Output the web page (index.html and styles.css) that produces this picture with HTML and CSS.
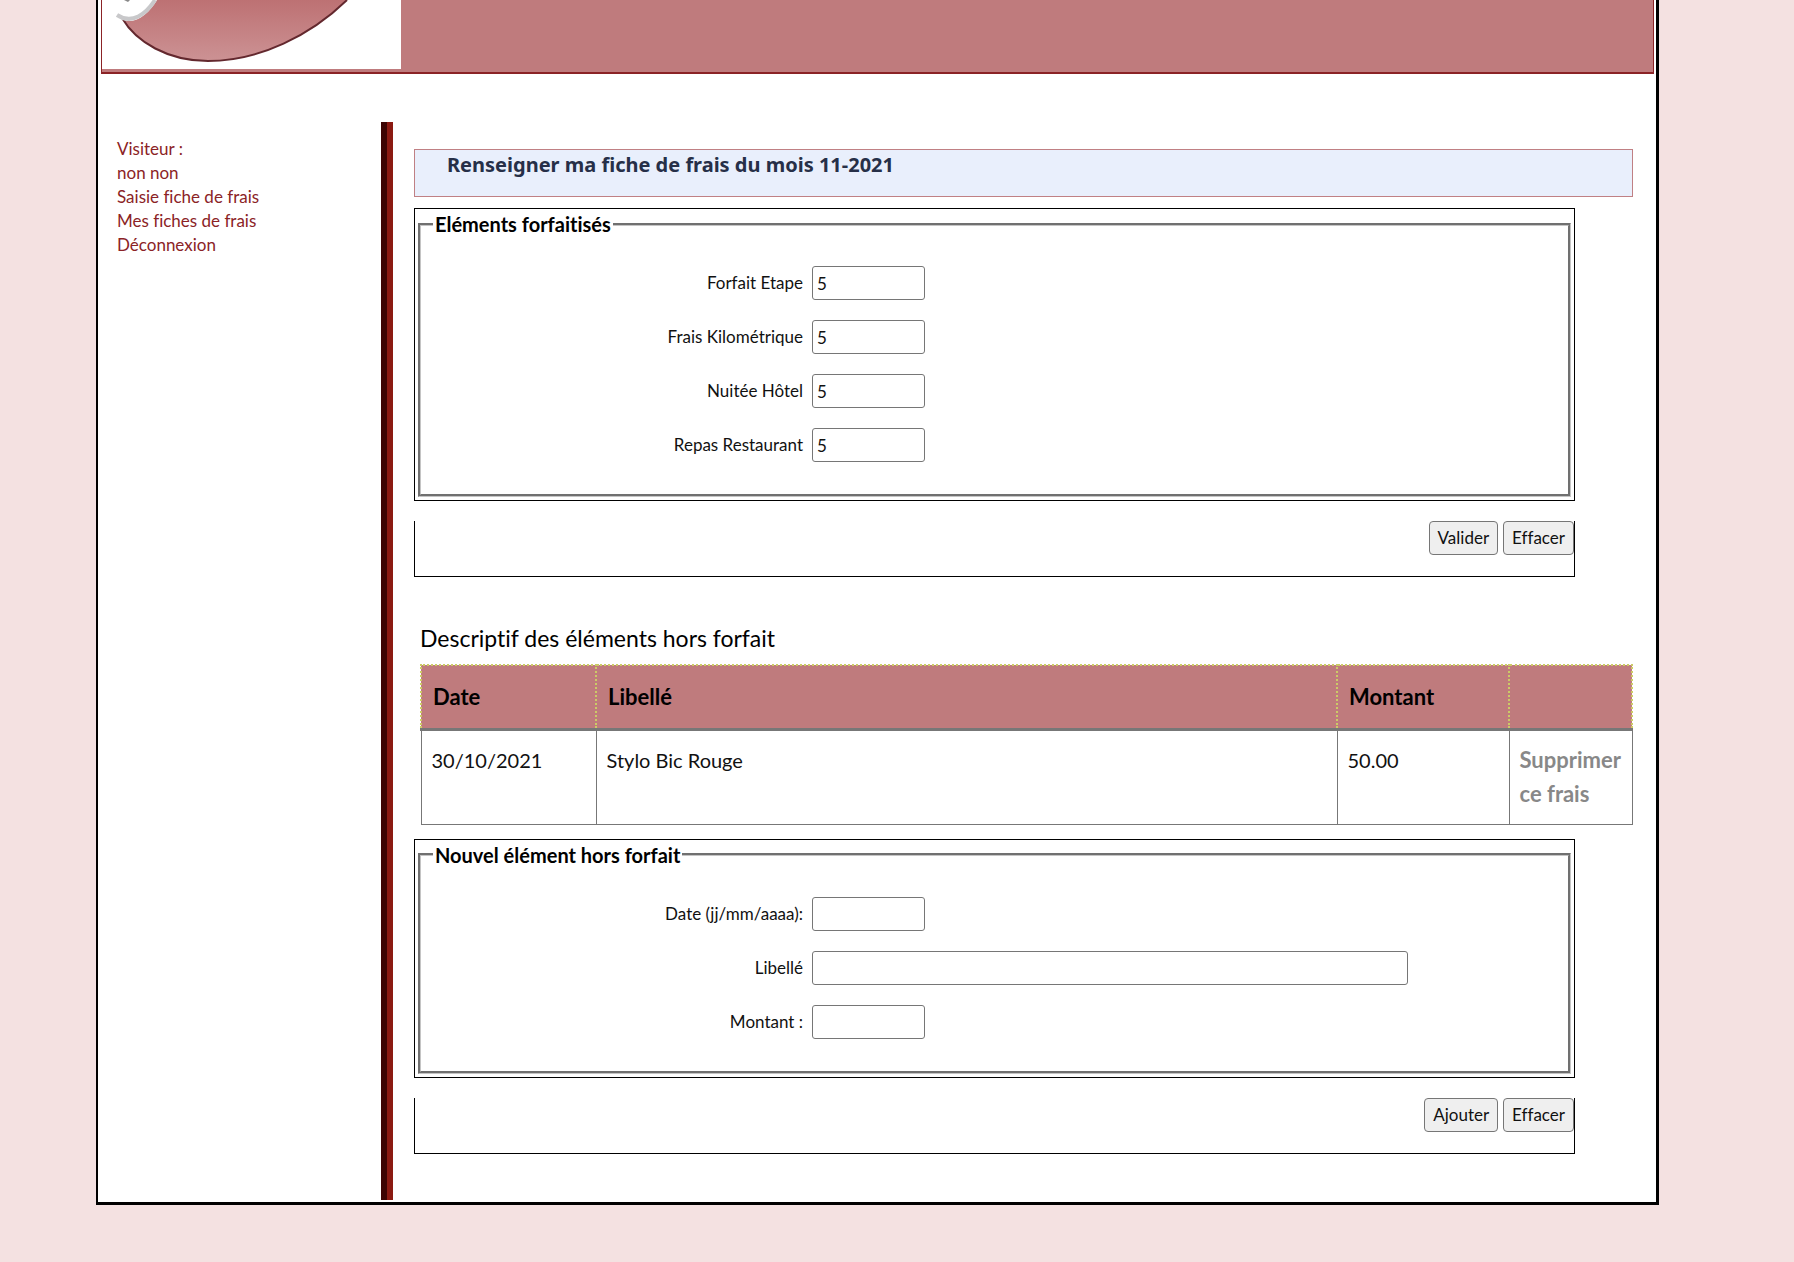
FILE: index.html
```html
<!DOCTYPE html>
<html lang="fr">
<head>
<meta charset="utf-8">
<title>Fiche de frais</title>
<link rel="stylesheet" href="styles.css">
</head>
<body>
<div class="page">
  <header class="banner">
    <svg class="logo" viewBox="0 0 299 69" role="img" aria-label="Logo">
      <defs>
        <linearGradient id="disc" x1="0" y1="0" x2="0" y2="1">
          <stop offset="0" stop-color="#bd7173"/>
          <stop offset="1" stop-color="#cc9294"/>
        </linearGradient>
      </defs>
      <path d="M20 18C34 42 66 61 106 61C158 61 209 35 245 0H48Z" fill="url(#disc)"/>
      <path d="M20 18C34 42 66 61 106 61C158 61 209 35 245 0" fill="none" stroke="#63282e" stroke-width="2"/>
      <path d="M0 0H55C48 12 37 22 25 21C20 20 17 18 15 15C17 12 13 4 10 0Z" fill="#fff"/>
      <path d="M15 15C30 25 44 14 53 0" fill="none" stroke="#c8c8ca" stroke-width="4"/>
      <path d="M22 0L26 2L28 0Z" fill="#888"/>
    </svg>
  </header>
  <div class="columns">
    <nav class="menu">
      <ul>
        <li>Visiteur :</li>
        <li>non non</li>
        <li><a href="#saisie">Saisie fiche de frais</a></li>
        <li><a href="#fiches">Mes fiches de frais</a></li>
        <li><a href="#deconnexion">Déconnexion</a></li>
      </ul>
    </nav>
    <main class="content" id="saisie">
      <h1>Renseigner ma fiche de frais du mois 11-2021</h1>
      <form>
        <div class="form-body">
          <fieldset>
            <legend>Eléments forfaitisés</legend>
            <div class="field"><label for="etape">Forfait Etape</label><input id="etape" type="text" value="5"></div>
            <div class="field"><label for="km">Frais Kilométrique</label><input id="km" type="text" value="5"></div>
            <div class="field"><label for="nuitee">Nuitée Hôtel</label><input id="nuitee" type="text" value="5"></div>
            <div class="field"><label for="repas">Repas Restaurant</label><input id="repas" type="text" value="5"></div>
          </fieldset>
        </div>
        <div class="form-foot">
          <button type="submit">Valider</button>
          <button type="reset">Effacer</button>
        </div>
      </form>
      <table>
        <caption>Descriptif des éléments hors forfait</caption>
        <thead>
          <tr><th class="date">Date</th><th>Libellé</th><th class="amount">Montant</th><th class="action"></th></tr>
        </thead>
        <tbody>
          <tr><td>30/10/2021</td><td>Stylo Bic Rouge</td><td>50.00</td><td><a href="#supprimer">Supprimer ce frais</a></td></tr>
        </tbody>
      </table>
      <form>
        <div class="form-body">
          <fieldset>
            <legend>Nouvel élément hors forfait</legend>
            <div class="field"><label for="date">Date (jj/mm/aaaa):</label><input id="date" type="text"></div>
            <div class="field"><label for="libelle">Libellé</label><input id="libelle" class="wide" type="text"></div>
            <div class="field"><label for="montant">Montant :</label><input id="montant" type="text"></div>
          </fieldset>
        </div>
        <div class="form-foot">
          <button type="submit">Ajouter</button>
          <button type="reset">Effacer</button>
        </div>
      </form>
    </main>
  </div>
</div>
</body>
</html>
```
FILE: styles.css
```css
* {
  box-sizing: border-box;
}

body {
  margin: 0 135px 56px 96px;
  background: #f4e1e1;
  color: #111;
  font-family: "Trebuchet MS", Lato, sans-serif;
  font-size: 17px;
  font-variant-ligatures: none;
  line-height: 24px;
}

a {
  color: inherit;
  text-decoration: none;
}

.page {
  padding: 0 2px 2px 3px;
  border: 3px solid #000;
  border-top: 0;
  border-left-width: 2px;
  background: #fff;
}

.banner {
  height: 74px;
  border: 1px solid #8b2326;
  border-top: 0;
  border-bottom-width: 2px;
  background: #bf7b7d;
}

.logo {
  display: block;
  width: 299px;
  height: 69px;
  background: #fff;
}

.columns {
  display: flex;
  margin-top: 48px;
}

.menu {
  flex: 0 0 280px;
  padding: 15px 16px;
  color: #8b2326;
}

.menu ul {
  margin: 0;
  padding: 0;
  list-style: none;
}

.content {
  flex: 1;
  min-width: 0;
  padding: 27px 21px 46px 33px;
  background: linear-gradient(to right, #3c0402 6px, #8b1a12 6px 12px, transparent 12px);
}

h1 {
  height: 48px;
  margin: 0 0 11px;
  padding: 3px 32px;
  border: 1px solid #c08084;
  background: #e9effc;
  color: #262f48;
  font-family: "Noto Sans", sans-serif;
  font-size: 20px;
  line-height: 24px;
}

form {
  margin-right: 58px;
}

.form-body {
  padding: 3px;
  border: 1px solid #000;
}

fieldset {
  margin: 0;
  padding: 30px 0 32px;
  border: 3px groove #c4c4c4;
}

legend {
  margin-left: 12px;
  padding: 0 2px;
  color: #000;
  font-size: 20px;
  font-weight: bold;
}

.field {
  display: flex;
  align-items: center;
  gap: 9px;
  margin-bottom: 20px;
}

.field:last-child {
  margin-bottom: 0;
}

.field label {
  width: 382px;
  text-align: right;
}

input {
  width: 113px;
  height: 34px;
  padding: 0 4px;
  border: 1px solid #767676;
  border-radius: 3px;
  background: #fff;
  color: #111;
  font: inherit;
}

input.wide {
  width: 596px;
}

.form-foot {
  display: flex;
  justify-content: flex-end;
  gap: 5px;
  height: 56px;
  margin-top: 20px;
  border: 1px solid #000;
  border-top: 0;
}

button {
  height: 34px;
  padding: 0 8px;
  border: 1px solid #767676;
  border-radius: 4px;
  background: #efefef;
  color: #111;
  font: inherit;
}

table {
  width: calc(100% - 6px);
  margin: 44px 0 14px 6px;
  border-collapse: collapse;
  table-layout: fixed;
  font-size: 20px;
  line-height: 34px;
}

caption {
  padding-bottom: 9px;
  color: #000;
  font-size: 23px;
  text-align: left;
}

th {
  height: 64px;
  padding: 0 11px;
  border: 2px dotted #cccb66;
  border-bottom: 3px solid #777;
  background: #bf7b7d;
  color: #000;
  font-size: 22px;
  text-align: left;
}

td {
  height: 95px;
  padding: 12px 10px;
  border: 1px solid #777;
  vertical-align: top;
}

td a {
  color: #888;
  font-size: 22px;
  font-weight: bold;
}

.date {
  width: 175px;
}

.amount {
  width: 172px;
}

.action {
  width: 123px;
}
```
